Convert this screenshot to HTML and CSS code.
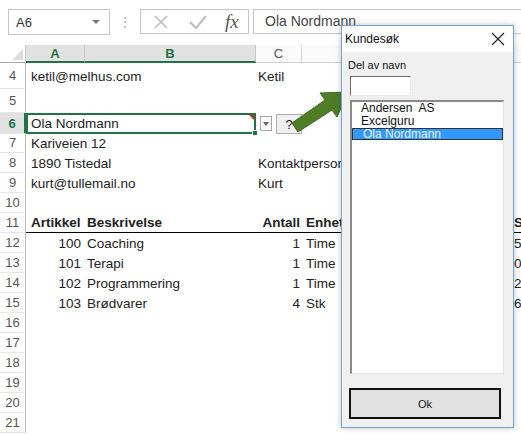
FILE: index.html
```html
<!DOCTYPE html>
<html lang="no">
<head>
  <meta charset="UTF-8">
  <meta name="viewport" content="width=device-width, initial-scale=1.0">
  <title>Kundesøk</title>
  <link rel="stylesheet" href="styles.css">
</head>
<body>
  <!-- Formula bar -->
  <div class="formula-bar">
    <div class="name-box"><span>A6</span><span class="caret"></span></div>
    <div class="grip">⋮</div>
    <div class="fx-buttons">
      <svg class="fx-icon" width="16" height="16" viewBox="0 0 16 16">
        <path d="M2 2 L14 14 M14 2 L2 14" stroke="#bdbdbd" stroke-width="1.6" fill="none"/>
      </svg>
      <svg class="fx-icon" width="18" height="16" viewBox="0 0 18 16">
        <path d="M1 8 L7 14 L17 2" stroke="#bdbdbd" stroke-width="2" fill="none"/>
      </svg>
      <span class="fx">fx</span>
    </div>
    <div class="formula-input">Ola Nordmann</div>
  </div>

  <!-- Sheet -->
  <div class="sheet">
    <div class="edge"></div>
    <div class="grid">
      <div class="row head">
        <div class="corner"><span class="corner-tri"></span></div>
        <div class="col-head active">A</div>
        <div class="col-head active">B</div>
        <div class="col-head">C</div>
        <div class="col-head">D</div>
        <div class="col-head"></div>
      </div>
      <div class="row r4">
        <div class="rh">4</div>
        <div class="c a">ketil@melhus.com</div>
        <div class="c"></div>
        <div class="c">Ketil</div>
        <div class="c"></div>
        <div class="c"></div>
      </div>
      <div class="row r5">
        <div class="rh">5</div>
        <div class="c"></div><div class="c"></div><div class="c"></div><div class="c"></div><div class="c"></div>
      </div>
      <div class="row r6">
        <div class="rh active">6</div>
        <div class="c sel">
          Ola Nordmann
          <span class="comment-mark"></span>
          <span class="fill-handle"></span>
        </div>
        <div class="c controls">
          <span class="drop-btn"><span class="caret"></span></span>
          <span class="q-btn">?</span>
        </div>
        <div class="c"></div>
        <div class="c"></div>
      </div>
      <div class="row">
        <div class="rh">7</div>
        <div class="c a">Kariveien 12</div>
        <div class="c"></div><div class="c"></div><div class="c"></div><div class="c"></div>
      </div>
      <div class="row">
        <div class="rh">8</div>
        <div class="c a">1890 Tistedal</div>
        <div class="c"></div>
        <div class="c">Kontaktperson</div>
        <div class="c"></div><div class="c"></div>
      </div>
      <div class="row">
        <div class="rh">9</div>
        <div class="c a">kurt@tullemail.no</div>
        <div class="c"></div>
        <div class="c">Kurt</div>
        <div class="c"></div><div class="c"></div>
      </div>
      <div class="row">
        <div class="rh">10</div>
        <div class="c"></div><div class="c"></div><div class="c"></div><div class="c"></div><div class="c"></div>
      </div>
      <div class="row ul bold">
        <div class="rh">11</div>
        <div class="c a">Artikkel</div>
        <div class="c">Beskrivelse</div>
        <div class="c num">Antall</div>
        <div class="c d">Enhet</div>
        <div class="c">S</div>
      </div>
      <div class="row">
        <div class="rh">12</div>
        <div class="c num a">100</div>
        <div class="c">Coaching</div>
        <div class="c num">1</div>
        <div class="c d">Time</div>
        <div class="c">5</div>
      </div>
      <div class="row">
        <div class="rh">13</div>
        <div class="c num a">101</div>
        <div class="c">Terapi</div>
        <div class="c num">1</div>
        <div class="c d">Time</div>
        <div class="c">0</div>
      </div>
      <div class="row">
        <div class="rh">14</div>
        <div class="c num a">102</div>
        <div class="c">Programmering</div>
        <div class="c num">1</div>
        <div class="c d">Time</div>
        <div class="c">2</div>
      </div>
      <div class="row">
        <div class="rh">15</div>
        <div class="c num a">103</div>
        <div class="c">Brødvarer</div>
        <div class="c num">4</div>
        <div class="c d">Stk</div>
        <div class="c">6</div>
      </div>
      <div class="row"><div class="rh">16</div></div>
      <div class="row"><div class="rh">17</div></div>
      <div class="row"><div class="rh">18</div></div>
      <div class="row"><div class="rh">19</div></div>
      <div class="row"><div class="rh">20</div></div>
      <div class="row"><div class="rh">21</div></div>
    </div>
  </div>

  <!-- Arrow pointing at the dialog -->
  <svg class="arrow" width="70" height="50" viewBox="0 0 70 50">
    <polygon points="7,38 40,15 35,8 63,7 52,32 47,25 13,47" fill="#4e7d26" stroke="#3f6a1d" stroke-width="1"/>
  </svg>

  <!-- Search dialog -->
  <div class="dialog">
    <div class="dialog-title">
      <span>Kundesøk</span>
      <svg width="14" height="14" viewBox="0 0 14 14">
        <path d="M1 1 L13 13 M13 1 L1 13" stroke="#222" stroke-width="1.2" fill="none"/>
      </svg>
    </div>
    <div class="dialog-body">
      <label class="field-label">Del av navn</label>
      <div class="text-box"></div>
      <div class="list-box">
        <div class="item">Andersen&nbsp; AS</div>
        <div class="item">Excelguru</div>
        <div class="item selected">Ola Nordmann</div>
      </div>
      <button class="ok-btn">Ok</button>
    </div>
  </div>
</body>
</html>
```

FILE: styles.css
```css
* {
  box-sizing: border-box;
}
body {
  margin: 0;
  width: 521px;
  height: 434px;
  overflow: hidden;
  position: relative;
  background-color: #fff;
  font-family: "Liberation Sans", Arial, sans-serif;
  color: #222;
}

/* Formula bar */
.formula-bar {
  display: flex;
  align-items: flex-start;
  height: 45px;
  padding: 9px 0 0 8px;
}
.name-box {
  width: 102px;
  height: 26px;
  border: 1px solid #c6c6c6;
  display: flex;
  align-items: center;
  justify-content: space-between;
  padding: 0 9px 0 7px;
  font-size: 13px;
  color: #333;
}
.caret {
  width: 0;
  height: 0;
  border-left: 4px solid transparent;
  border-right: 4px solid transparent;
  border-top: 4px solid #777;
}
.grip {
  width: 30px;
  height: 26px;
  line-height: 26px;
  text-align: center;
  color: #b0b0b0;
  font-size: 14px;
}
.fx-buttons {
  width: 109px;
  height: 25px;
  border: 1px solid #c6c6c6;
  display: flex;
  align-items: center;
  padding-left: 12px;
}
.fx-icon {
  margin-right: 20px;
}
.fx {
  font-family: "Liberation Serif", serif;
  font-style: italic;
  font-size: 19px;
  color: #555;
  margin-left: -2px;
}
.formula-input {
  flex: 1;
  height: 25px;
  margin-left: 4px;
  border: 1px solid #c6c6c6;
  border-right: none;
  padding-left: 11px;
  font-size: 14px;
  line-height: 23px;
  color: #444;
}

/* Sheet */
.sheet {
  display: flex;
}
.edge {
  width: 2px;
  background-color: #3b8be6;
}
.grid {
  flex: 1;
}
.row {
  display: grid;
  grid-template-columns: 26px 59px 171px 46px 210px 1fr;
  height: 20px;
}
.row.head {
  height: 18px;
}
.row.r4 {
  height: 26px;
}
.row.r5 {
  height: 24px;
}
.corner {
  position: relative;
  background-color: #fff;
  border-right: 1px solid #c8c8c8;
  border-bottom: 1px solid #ababab;
}
.corner-tri {
  position: absolute;
  right: 2px;
  bottom: 2px;
  width: 0;
  height: 0;
  border-left: 11px solid transparent;
  border-bottom: 11px solid #dcdcdc;
}
.col-head {
  display: flex;
  align-items: center;
  justify-content: center;
  background-color: #fafafa;
  border-right: 1px solid #d8d8d8;
  border-bottom: 1px solid #d0d0d0;
  font-size: 13px;
  color: #555;
}
.col-head.active {
  background-color: #e1e1e1;
  color: #217346;
  font-weight: bold;
  border-right-color: #c6c6c6;
  border-bottom: 2px solid #217346;
}
.rh {
  display: flex;
  align-items: center;
  justify-content: center;
  border-right: 1px solid #bdbdbd;
  border-bottom: 1px solid #e6e6e6;
  font-size: 13px;
  color: #555;
}
.rh.active {
  background-color: #e1e1e1;
  color: #217346;
  font-weight: bold;
  border-right: 2px solid #217346;
}
.c {
  display: flex;
  align-items: center;
  padding: 0 2px;
  font-size: 13.5px;
  white-space: nowrap;
  overflow: visible;
}
.c.a {
  padding-left: 5px;
}
.c.d {
  padding-left: 4px;
}
.c.num {
  justify-content: flex-end;
  padding-right: 2px;
}
.c.num.a {
  padding-right: 4px;
}
.bold .c {
  font-weight: bold;
}
.ul .c {
  border-bottom: 1px solid #000;
}

/* Selected merged cell A6:B6 */
.sel {
  grid-column: span 2;
  position: relative;
  border: 2px solid #217346;
  padding-left: 3px;
}
.comment-mark {
  position: absolute;
  top: 0;
  right: 0;
  width: 0;
  height: 0;
  border-left: 5px solid transparent;
  border-top: 5px solid #d22;
}
.fill-handle {
  position: absolute;
  right: -4px;
  bottom: -4px;
  width: 6px;
  height: 6px;
  background-color: #217346;
  border: 1px solid #fff;
}
.controls {
  padding: 0;
  gap: 4px;
  padding-left: 4px;
}
.drop-btn {
  width: 12px;
  height: 15px;
  border: 1px solid #a8a8a8;
  background-color: #fafafa;
  display: flex;
  align-items: center;
  justify-content: center;
}
.drop-btn .caret {
  border-left-width: 3px;
  border-right-width: 3px;
  border-top-width: 4px;
  border-top-color: #666;
}
.q-btn {
  width: 26px;
  height: 20px;
  margin-top: 1px;
  background-color: #f0f0f0;
  border: 1px solid #adadad;
  display: flex;
  align-items: center;
  justify-content: center;
  font-size: 13px;
}

/* Arrow */
.arrow {
  position: absolute;
  left: 285px;
  top: 85px;
}

/* Dialog */
.dialog {
  position: absolute;
  left: 341px;
  top: 25px;
  width: 173px;
  height: 403px;
  border: 1px solid #6ea6dd;
  background-color: #f0f0f0;
  box-shadow: 0 0 6px rgba(0, 0, 0, 0.25);
  display: flex;
  flex-direction: column;
}
.dialog-title {
  height: 26px;
  background-color: #fff;
  display: flex;
  align-items: center;
  justify-content: space-between;
  padding: 0 8px 0 3px;
  font-size: 12px;
  color: #111;
}
.dialog-body {
  display: flex;
  flex-direction: column;
  align-items: flex-start;
  font-size: 11px;
}
.field-label {
  margin: 7px 0 0 6px;
  color: #111;
}
.text-box {
  width: 61px;
  height: 20px;
  margin: 5px 0 0 8px;
  background-color: #fff;
  border-top: 1px solid #6d6d6d;
  border-left: 1px solid #6d6d6d;
  border-right: 1px solid #e8e8e8;
  border-bottom: 1px solid #e8e8e8;
}
.list-box {
  width: 154px;
  height: 274px;
  margin: 4px 0 0 8px;
  background-color: #fff;
  border-top: 2px solid #8a8a8a;
  border-left: 2px solid #8a8a8a;
  border-right: 1px solid #e3e3e3;
  border-bottom: 1px solid #e3e3e3;
  font-size: 12px;
}
.item {
  height: 13px;
  line-height: 13px;
  padding-left: 9px;
  color: #111;
}
.item.selected {
  background-color: #3399ff;
  color: #e6f2ff;
  border: 1px solid #333;
  height: 12px;
  line-height: 10px;
  padding-left: 10px;
}
.ok-btn {
  width: 152px;
  height: 31px;
  margin: 14px 0 0 7px;
  background-color: #e1e1e1;
  border: 2px solid #111;
  font-family: "Liberation Sans", Arial, sans-serif;
  font-size: 11px;
  color: #111;
}
```
